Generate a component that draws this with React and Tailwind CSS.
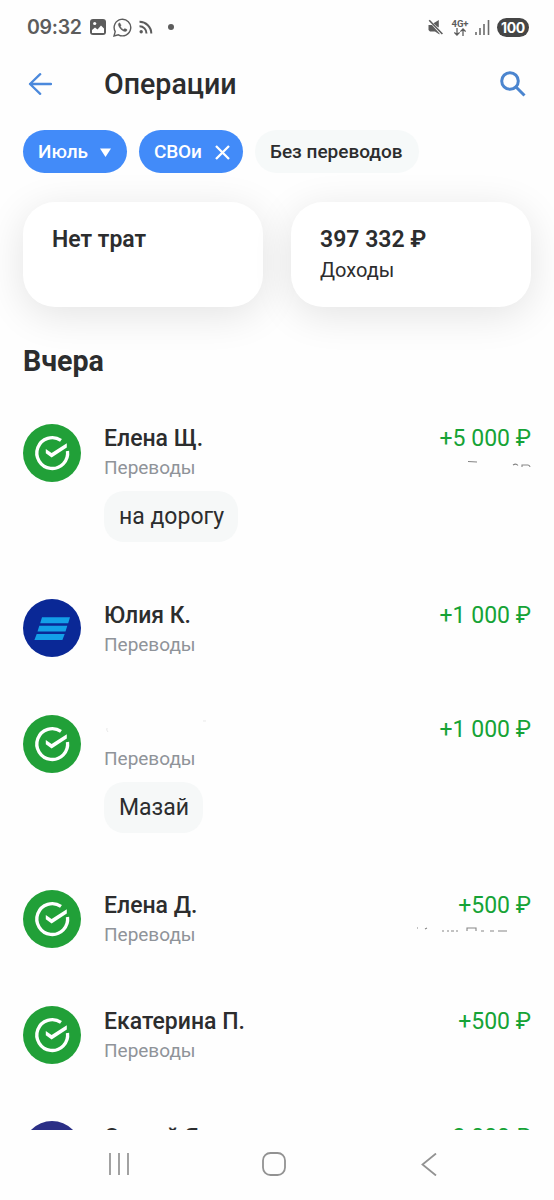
import React from "react";

function SberLogo() {
  return (
    <svg viewBox="0 0 58 58" className="size-[58px] shrink-0">
      <circle cx="29" cy="29" r="29" fill="#21a038" />
      <path d="M38 16.4 A15.4 15.4 0 1 0 44.5 27" fill="none" stroke="#fff" strokeWidth="3.3" />
      <path d="M22.8 25L28.6 29L43.8 19.3V23.4L28.6 33.4L22.8 29.3Z" fill="#fff" />
    </svg>
  );
}

function StripesLogo() {
  return (
    <svg viewBox="0 0 58 58" className="-mt-px size-[58px] shrink-0">
      <circle cx="29" cy="29" r="29" fill="#0a2896" />
      <path d="M19 18.3H47L45.2 24.3H17.2Z M16.3 26.8H44.3L42.5 32.5H14.5Z M13.7 35H41.7L39.4 41H11.4Z" fill="#139fe8" />
    </svg>
  );
}

function PlainLogo() {
  return <div className="size-[58px] shrink-0 rounded-full bg-[#2b2f86]" />;
}

const operations = [
  { logo: "sber", name: "Елена Щ.", amount: "+5 000 ₽", note: "на дорогу", trace: "M79 1.5L88 2M124 5Q127 3 129 5.5M133 7V5H139Q141 5.5 141 7", height: "h-[176px]", offset: "pt-px" },
  { logo: "stripes", name: "Юлия К.", amount: "+1 000 ₽", height: "h-[115px]", offset: "pt-[2px]" },
  { logo: "sber", name: "", amount: "+1 000 ₽", note: "Мазай", height: "h-[175px]", offset: "pt-px" },
  { logo: "sber", name: "Елена Д.", amount: "+500 ₽", trace: "M28 1H29M36 2L38 1M53 4H55M58 4H60M62 4H65M67 4H69M78 4V1H87V4M92 4H95M101 4H105M109 4H118", height: "h-[116px]", offset: "pt-[2px]" },
  { logo: "sber", name: "Екатерина П.", amount: "+500 ₽", height: "h-[115px]", offset: "pt-[2px]" },
  { logo: "plain", name: "Сергей Я.", amount: "+2 000 ₽", height: "h-[115px]", offset: "pt-[3px]" },
];

const logos = { sber: SberLogo, stripes: StripesLogo, plain: PlainLogo };

function Operation({ logo, name, amount, note, trace, height, offset }) {
  const Logo = logos[logo];
  return (
    <li className={`flex shrink-0 ${height}`}>
      <Logo />
      <div className={`ml-[23px] flex flex-1 flex-col items-start ${offset}`}>
        <div className="flex h-7 w-full shrink-0 justify-between text-[23px] leading-7">
          {name ? (
            <span className="font-medium">{name}</span>
          ) : (
            <svg className="h-7 w-[110px]" viewBox="0 0 110 28" fill="none" stroke="#e9e9e9">
              <path d="M3 12Q2 14 4 16M99 5H102" />
            </svg>
          )}
          <span className="text-[#16a336]">{amount}</span>
        </div>
        <div className="mt-[3px] flex h-6 w-full shrink-0 justify-between text-[19px] leading-6 text-[#8f9399]">
          <span>Переводы</span>
          {trace && (
            <svg className="mt-1 h-3 w-[142px]" viewBox="0 0 142 12" fill="none" stroke="#858585" strokeWidth="1.1">
              <path d={trace} />
            </svg>
          )}
        </div>
        {note && (
          <div className="mt-[11px] flex h-[51px] shrink-0 items-center rounded-[20px] bg-[#f6f8f8] pl-[15px] pr-[14px] pt-[2px] text-[23px]">{note}</div>
        )}
      </div>
    </li>
  );
}

function StatusBar() {
  return (
    <div className="flex h-[54px] shrink-0 items-center justify-between pl-[27px] pr-[25px] text-[#5c5c5c]">
      <div className="flex items-center">
        <span className="w-[55px] text-[19.5px] font-semibold leading-6 font-['Inter',sans-serif] tracking-[-0.3px]">09:32</span>
        <svg className="ml-[8px] size-4" viewBox="0 0 16 16">
          <rect width="16" height="16" rx="3" fill="#5c5c5c" />
          <path d="M2 11L5 8.5L7.5 10.5L11 6.5L14 9.5V14H2Z" fill="#fff" />
          <circle cx="4.7" cy="4.5" r="1.6" fill="#fff" />
        </svg>
        <svg className="ml-[7px] size-[19px]" viewBox="0 0 19 19" fill="none" stroke="#5c5c5c" strokeWidth="1.4">
          <path d="M1 18L2.2 13.6A8.3 8.3 0 1 1 5.4 16.8Z" />
          <path d="M6.7 4.8L5.4 5.7C4.8 8 8.6 13.4 12.4 13.5C13.6 13.4 14.2 12.2 14 11.6L11.8 10.5L10.7 11.6C9.2 11 8.2 10 7.4 8.4L8.1 7.2Z" fill="#5c5c5c" strokeWidth=".4" />
        </svg>
        <svg className="ml-[7px] size-[14px]" viewBox="0 0 14 14" fill="none" stroke="#5c5c5c" strokeWidth="2">
          <circle cx="2.2" cy="11.8" r="1.7" fill="#5c5c5c" stroke="none" />
          <path d="M.5 6.3A7 7 0 0 1 7.5 13.5M.5 1.8A11.7 11.7 0 0 1 12.3 13.5" />
        </svg>
        <span className="ml-[15px] size-1.5 rounded-full bg-[#5c5c5c]" />
      </div>
      <div className="flex items-center">
        <svg className="size-4" viewBox="0 0 16 16" fill="#5c5c5c">
          <path d="M1.5 6H5L12.5 14.5V15.5L8 12.5H3L1.5 11Z M6.5 4.2L11.8 1V8.4L10 7.5Z" />
          <path d="M2.2 1.2L15.4 15" stroke="#5c5c5c" strokeWidth="1.6" />
        </svg>
        <div className="ml-[8px] flex w-[18px] flex-col items-center">
          <span className="text-[9.5px] font-bold leading-[9px] font-['Roboto',sans-serif]">4G+</span>
          <svg className="h-[8px] w-[12px]" viewBox="0 0 12 8" fill="none" stroke="#5c5c5c" strokeWidth="1.3">
            <path d="M3 0V7M.4 4.4L3 7L5.6 4.4M9 8V1M6.4 3.6L9 1L11.6 3.6" />
          </svg>
        </div>
        <svg className="ml-[6px] h-[15px] w-[15px]" viewBox="0 0 15 15" stroke="#6c6c6c" strokeWidth="1.6">
          <path d="M1 12V15M5 8V15M9 4V15M13.5 0V15" />
        </svg>
        <span className="ml-[7px] flex h-[19px] w-8 items-center justify-center rounded-full bg-[#454545] text-[14px] font-bold tracking-[-0.3px] text-white font-['Inter',sans-serif]">100</span>
      </div>
    </div>
  );
}

export default function App() {
  return (
    <div className="flex h-[1200px] w-[554px] flex-col overflow-hidden bg-[#fefefe] font-['Roboto',sans-serif] text-[#2c2d2e]">
      <StatusBar />
      <header className="flex h-[60px] shrink-0 items-center pl-[28px] pr-[28px]">
        <svg className="h-[22px] w-6" viewBox="0 0 24 22" fill="none" stroke="#4b89dc" strokeWidth="2.3" strokeLinecap="round" strokeLinejoin="round">
          <path d="M23 11H2M12.2 1.2L2 11L12.2 20.8" />
        </svg>
        <h1 className="ml-[52px] flex-1 text-[28.6px] font-medium leading-8">Операции</h1>
        <svg className="size-[26px]" viewBox="0 0 26 26" fill="none" stroke="#4b85cf" strokeWidth="3">
          <circle cx="10" cy="10" r="8.3" />
          <path d="M16 16L24.5 24.5" />
        </svg>
      </header>
      <div className="mt-4 flex h-[43px] shrink-0 gap-[12px] pl-[23px] text-[19px] font-medium">
        <button className="flex w-[104px] items-center rounded-full bg-[#428bf9] pl-[15px] pt-px text-white">
          Июль
          <svg className="ml-[12px] h-[9px] w-[11px]" viewBox="0 0 11 9" fill="#fff"><path d="M0 .5H11L5.5 9Z" /></svg>
        </button>
        <button className="flex w-[104px] items-center rounded-full bg-[#428bf9] pl-[15px] pt-px text-white">
          <span className="tracking-[-0.2px]">СВОи</span>
          <svg className="ml-[13px] size-[15px]" viewBox="0 0 15 15" stroke="#fff" strokeWidth="2.3"><path d="M1 1L14 14M14 1L1 14" /></svg>
        </button>
        <button className="flex w-[164px] items-center rounded-full bg-[#f6f9f9] pl-[15px] pt-px">Без переводов</button>
      </div>
      <div className="mt-[29px] flex shrink-0 gap-[28px] px-[23px]">
        <div className="h-[105px] w-[240px] rounded-[32px] bg-white pl-[29px] pt-[24px] shadow-[0_8px_40px_rgba(0,0,0,0.11)]">
          <div className="text-[23px] font-semibold leading-7">Нет трат</div>
        </div>
        <div className="h-[105px] w-[240px] rounded-[32px] bg-white pl-[29px] pt-[24px] shadow-[0_8px_40px_rgba(0,0,0,0.11)]">
          <div className="text-[23px] font-semibold leading-7">397 332 ₽</div>
          <div className="mt-[4px] text-[20px] leading-6">Доходы</div>
        </div>
      </div>
      <h2 className="mt-[36px] h-[36px] shrink-0 pl-[23px] text-[28.6px] font-bold leading-9">Вчера</h2>
      <ul className="mt-[45px] flex h-[706px] shrink-0 flex-col overflow-hidden px-[23px]">
        {operations.map((item, index) => (
          <Operation key={index} {...item} />
        ))}
      </ul>
      <nav className="flex h-[68px] items-center text-[#929292]">
        <svg className="ml-[108px] h-[22px] w-[22px]" viewBox="0 0 22 22" stroke="currentColor" strokeWidth="1.7"><path d="M2 0V22M11 0V22M20 0V22" /></svg>
        <svg className="ml-[132px] size-6" viewBox="0 0 24 24" fill="none" stroke="currentColor" strokeWidth="1.8"><rect x="1" y="1" width="22" height="22" rx="7.5" /></svg>
        <svg className="ml-[135px] h-[23px] w-4" viewBox="0 0 16 23" fill="none" stroke="currentColor" strokeWidth="1.8"><path d="M15 .5L1.5 11.5L15 22.5" /></svg>
      </nav>
    </div>
  );
}
